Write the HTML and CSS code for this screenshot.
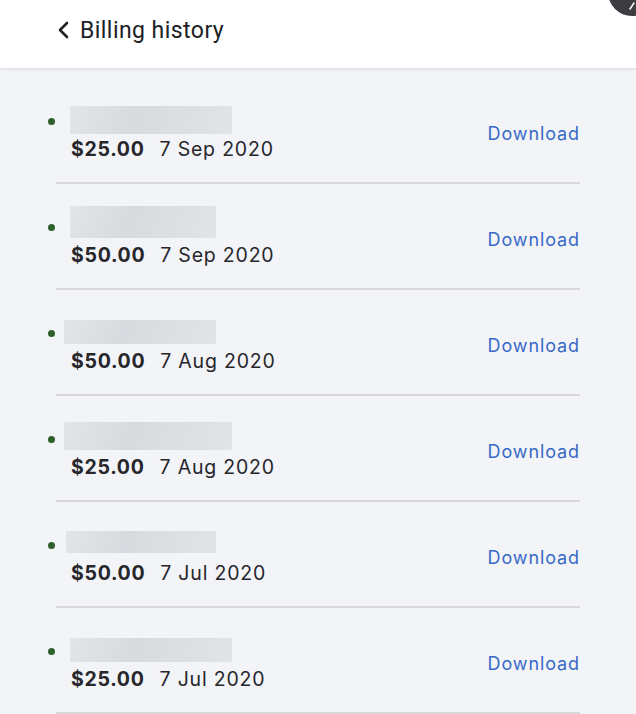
FILE: index.html
```html
<!DOCTYPE html>
<html>
<head>
<meta charset="utf-8">
<link rel="stylesheet" href="styles.css">
</head>
<body>
<header class="header">
  <svg class="back" width="14" height="18" viewBox="0 0 14 18"><polyline points="10,2 3,9 10,16" fill="none" stroke="#202124" stroke-width="2.6" stroke-linecap="round" stroke-linejoin="round"/></svg>
  <span class="title">Billing history</span>
  <svg class="avatar" width="30" height="24" viewBox="0 0 30 24"><circle cx="26" cy="-8" r="24" fill="#3c3c41"/><line x1="24" y1="9" x2="28" y2="3" stroke="#ffffff" stroke-width="1.5" stroke-linecap="round"/></svg>
</header>
<main class="content">
  <ul class="list">
    <li class="row">
      <div class="info">
        <div class="name"><div class="blur b1"></div></div>
        <div class="meta"><span class="amount">$25.00</span><span class="date">7 Sep 2020</span></div>
      </div>
      <a class="download">Download</a>
    </li>
    <li class="row">
      <div class="info">
        <div class="name"><div class="blur b2"></div></div>
        <div class="meta"><span class="amount">$50.00</span><span class="date">7 Sep 2020</span></div>
      </div>
      <a class="download">Download</a>
    </li>
    <li class="row">
      <div class="info">
        <div class="name"><div class="blur b3"></div></div>
        <div class="meta"><span class="amount">$50.00</span><span class="date">7 Aug 2020</span></div>
      </div>
      <a class="download">Download</a>
    </li>
    <li class="row">
      <div class="info">
        <div class="name"><div class="blur b4"></div></div>
        <div class="meta"><span class="amount">$25.00</span><span class="date">7 Aug 2020</span></div>
      </div>
      <a class="download">Download</a>
    </li>
    <li class="row">
      <div class="info">
        <div class="name"><div class="blur b5"></div></div>
        <div class="meta"><span class="amount">$50.00</span><span class="date">7 Jul 2020</span></div>
      </div>
      <a class="download">Download</a>
    </li>
    <li class="row">
      <div class="info">
        <div class="name"><div class="blur b6"></div></div>
        <div class="meta"><span class="amount">$25.00</span><span class="date">7 Jul 2020</span></div>
      </div>
      <a class="download">Download</a>
    </li>
  </ul>
</main>
</body>
</html>
```
FILE: styles.css
```css
* { box-sizing: border-box; }
html, body {
  margin: 0;
  padding: 0;
  background: #f3f4f8;
  height: 714px;
  overflow: hidden;
}
body {
  font-family: Inter, "Noto Sans", sans-serif;
  color: #26262b;
}
.header {
  position: relative;
  height: 68px;
  background: #ffffff;
  box-shadow: 0 1px 3px rgba(0, 0, 0, 0.12);
  display: flex;
  align-items: center;
  padding-left: 57px;
  padding-bottom: 8px;
}
.back {
  display: block;
  margin-right: 9px;
}
.title {
  font-family: Roboto, sans-serif;
  font-size: 23px;
  color: #202124;
  letter-spacing: 0.45px;
}
.avatar {
  position: absolute;
  top: 0;
  right: 0;
}
.content {
  padding-top: 10px;
}
.list {
  list-style: none;
  margin: 0;
  padding: 0 56px;
}
.row {
  position: relative;
  height: 106px;
  border-bottom: 2px solid #d9d9db;
  display: flex;
  justify-content: space-between;
  align-items: flex-start;
  padding-top: 22px;
}
.row::before {
  content: "";
  position: absolute;
  left: -8px;
  top: 40px;
  width: 7px;
  height: 7px;
  border-radius: 50%;
  background: #2d5f2a;
}
.info {
  display: flex;
  flex-direction: column;
}
.name {
  height: 34px;
  display: flex;
  align-items: flex-end;
}
.blur {
  background: linear-gradient(110deg, #e3e4e8 0%, #d9dadf 40%, #e2e3e7 100%);
  border-radius: 1px;
}
.b1 { width: 162px; height: 28px; margin-left: 14px; }
.b2 { width: 146px; height: 32px; margin-left: 14px; margin-bottom: 2px; }
.b3 { width: 152px; height: 24px; margin-left: 8px; margin-bottom: 2px; }
.b4 { width: 168px; height: 28px; margin-left: 8px; margin-bottom: 2px; }
.b5 { width: 150px; height: 22px; margin-left: 10px; margin-bottom: 5px; }
.b6 { width: 162px; height: 24px; margin-left: 14px; margin-bottom: 2px; }
.meta {
  margin-top: 3px;
  padding-left: 15px;
  font-size: 19.5px;
  line-height: 24px;
  display: flex;
  gap: 15px;
}
.amount {
  font-weight: 700;
  letter-spacing: 0.7px;
}
.date {
  font-weight: 400;
  letter-spacing: 0.8px;
}
.download {
  margin-top: 23px;
  font-size: 18px;
  line-height: 22px;
  color: #3769c6;
  letter-spacing: 0.9px;
  cursor: pointer;
}
```
